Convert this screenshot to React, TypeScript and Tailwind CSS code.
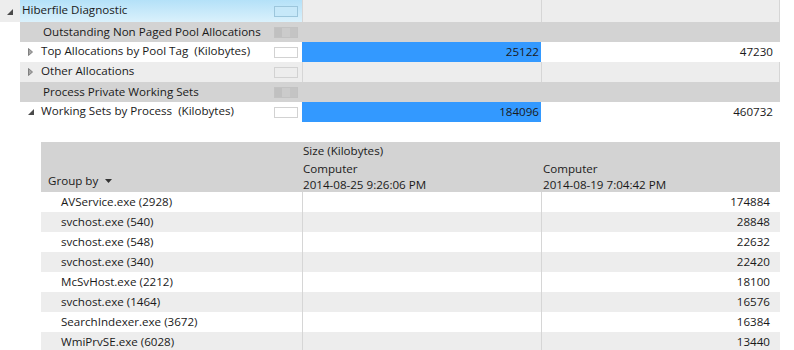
const FONT = { fontFamily: '"Open Sans", "Noto Sans", sans-serif' }

type TopRow = {
  kind: 'selected' | 'group' | 'item'
  label: string
  expanded?: boolean
  shade?: boolean
  bar?: string
  total?: string
}

const TOP_ROWS: TopRow[] = [
  { kind: 'selected', label: 'Hiberfile Diagnostic', expanded: true },
  { kind: 'group', label: 'Outstanding Non Paged Pool Allocations' },
  { kind: 'item', label: 'Top Allocations by Pool Tag  (Kilobytes)', bar: '25122', total: '47230' },
  { kind: 'item', label: 'Other Allocations', shade: true },
  { kind: 'group', label: 'Process Private Working Sets' },
  { kind: 'item', label: 'Working Sets by Process  (Kilobytes)', expanded: true, bar: '184096', total: '460732' },
]

const PROCESSES = [
  { name: 'AVService.exe (2928)', size: '174884' },
  { name: 'svchost.exe (540)', size: '28848' },
  { name: 'svchost.exe (548)', size: '22632' },
  { name: 'svchost.exe (340)', size: '22420' },
  { name: 'McSvHost.exe (2212)', size: '18100' },
  { name: 'svchost.exe (1464)', size: '16576' },
  { name: 'SearchIndexer.exe (3672)', size: '16384' },
  { name: 'WmiPrvSE.exe (6028)', size: '13440' },
]

function TreeArrow({ expanded }: { expanded?: boolean }) {
  if (expanded) {
    return (
      <svg width="6" height="6" viewBox="0 0 6 6" className="block">
        <path d="M6 0 L6 6 L0 6 Z" fill="#4a4a4a" />
      </svg>
    )
  }
  return (
    <svg width="5" height="8" viewBox="0 0 5 8" className="block">
      <path d="M0.5 0.5 L4.5 4 L0.5 7.5 Z" fill="#a6a6a6" stroke="#808080" strokeWidth="1" />
    </svg>
  )
}

// little swatch box at the end of each tree row
function Swatch({ kind }: { kind: 'selected' | 'group' | 'white' | 'shade' }) {
  if (kind === 'group') {
    return (
      <div className="flex h-[11px] w-[24px] border border-[#c2c2c2] bg-[#c6c6c6]">
        <div className="w-[7px] bg-[#c0c0c0]" />
        <div className="w-[8px] bg-[#cbcbcb]" />
        <div className="flex-1 bg-[#c4c4c4]" />
      </div>
    )
  }
  const cls =
    kind === 'selected'
      ? 'border-[#9cc6dc] bg-[#c6e8f9]'
      : kind === 'shade'
        ? 'border-[#d2d2d2] bg-[#ededed]'
        : 'border-[#d2d2d2] bg-white'
  return <div className={`h-[11px] w-[24px] border ${cls}`} />
}

function TreeRow({ row }: { row: TopRow }) {
  if (row.kind === 'selected') {
    return (
      <div className="flex h-[22px] w-[780px] bg-[#ededed] border-r border-[#d6d6d6]">
        <div className="flex w-[20px] items-center justify-end pr-[7px] pt-[1px]">
          <TreeArrow expanded />
        </div>
        <div className="flex w-[282px] items-center bg-gradient-to-b from-[#b4e1f8] to-[#daf1fc]">
          <span className="flex-1 pl-[2px] pb-[3px]">{row.label}</span>
          <div className="mr-[4px]">
            <Swatch kind="selected" />
          </div>
        </div>
        <div className="w-[239px] border-l border-[#d6d6d6]" />
        <div className="w-[238px] border-l border-[#d6d6d6]" />
      </div>
    )
  }

  if (row.kind === 'group') {
    return (
      <div className="flex h-[20px] w-[780px]">
        <div className="w-[20px]" />
        <div className="flex flex-1 items-center bg-[#d3d3d3]">
          <span className="w-[254px] pl-[23px] pb-[1px] whitespace-pre">{row.label}</span>
          <div className="mr-[4px]">
            <Swatch kind="group" />
          </div>
        </div>
      </div>
    )
  }

  const bg = row.shade ? 'bg-[#ededed]' : 'bg-white'
  return (
    <div className="flex h-[20px] w-[780px]">
      <div className="w-[20px]" />
      <div className={`flex w-[282px] items-center ${bg}`}>
        <div className="flex w-[20px] items-center justify-start pl-[8px]">
          <TreeArrow expanded={row.expanded} />
        </div>
        <span className="flex-1 pl-[1px] pb-[2px] whitespace-pre">{row.label}</span>
        <div className="mr-[4px]">
          <Swatch kind={row.shade ? 'shade' : 'white'} />
        </div>
      </div>
      {row.bar ? (
        <>
          <div className="flex w-[239px] items-center justify-end bg-[#3399ff] pr-[2px]">{row.bar}</div>
          <div className="flex w-[239px] items-center justify-end pr-[7px]">{row.total}</div>
        </>
      ) : (
        <>
          <div className={`w-[239px] border-l border-[#d6d6d6] ${bg}`} />
          <div className={`w-[239px] border-x border-[#d6d6d6] ${bg}`} />
        </>
      )}
    </div>
  )
}

function GroupByArrow() {
  return (
    <svg width="7" height="4" viewBox="0 0 7 4" className="ml-[7px] block">
      <path d="M0 0 L7 0 L3.5 4 Z" fill="#333" />
    </svg>
  )
}

export default function App() {
  return (
    <div
      className="h-[350px] w-[794px] overflow-hidden bg-white text-[11.6px] leading-[16px] text-[#1a1a1a]"
      style={FONT}
    >
      {/* Tree section */}
      <div className="flex flex-col">
        {TOP_ROWS.map(row => (
          <TreeRow key={row.label} row={row} />
        ))}
      </div>

      {/* Process grid */}
      <div className="ml-[41px] mt-[20px] w-[739px]">
        <div className="flex h-[50px] bg-[#d3d3d3]">
          <div className="flex w-[261px] items-end pb-[3px] pl-[7px]">
            <span>Group by</span>
            <div className="mb-[6px]">
              <GroupByArrow />
            </div>
          </div>
          <div className="flex flex-1 flex-col pt-[1px]">
            <div className="h-[18px] pl-[1px]">Size (Kilobytes)</div>
            <div className="flex">
              <div className="w-[239px] pl-[1px]">
                <div>Computer</div>
                <div className="leading-[15px]">2014-08-25 9:26:06 PM</div>
              </div>
              <div className="flex-1 pl-[2px]">
                <div>Computer</div>
                <div className="leading-[15px]">2014-08-19 7:04:42 PM</div>
              </div>
            </div>
          </div>
        </div>

        {PROCESSES.map((p, i) => (
          <div key={p.name} className={`flex h-[20px] ${i % 2 ? 'bg-[#ededed]' : 'bg-white'}`}>
            <div className="flex w-[261px] items-center pl-[20px] pb-[1px]">{p.name}</div>
            <div className="w-[239px] border-l border-[#d6d6d6]" />
            <div className="flex flex-1 items-center justify-end border-l border-[#d6d6d6] pr-[10px] pb-[1px]">
              {p.size}
            </div>
          </div>
        ))}
      </div>
    </div>
  )
}
